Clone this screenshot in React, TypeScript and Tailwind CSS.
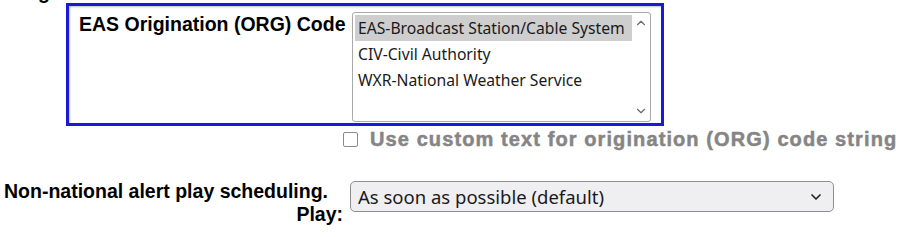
import { ChevronDown, ChevronUp } from "lucide-react";

const orgCodes = [
  "EAS-Broadcast Station/Cable System",
  "CIV-Civil Authority",
  "WXR-National Weather Service",
];

export default function App() {
  return (
    <div className="w-[907px] h-[237px] overflow-hidden bg-white font-['Liberation_Sans',Arial,sans-serif] text-black">
      {/* heading above, cut off by the viewport */}
      <div className="-mt-[18px] ml-[38px] h-[21px] text-[19.5px] font-bold leading-[21px]">g</div>

      {/* ORG code box */}
      <div className="ml-[66px] w-[598px] h-[123px] border-[3px] border-[#1a1ad6] shadow-[inset_1px_1px_2px_rgba(0,0,0,0.25)] flex pl-[10px]">
        <label className="w-[273px] text-[19.5px] font-bold leading-[22px] pt-[7px] whitespace-nowrap">
          EAS Origination (ORG) Code
        </label>
        <div className="mt-[6px] w-[299px] h-[110px] border border-[#a9a9a9] rounded-[3px] bg-white flex font-['Noto_Sans',sans-serif] text-[15.7px] text-[#1a1a1a]">
          <div className="flex-1 pt-[2px] pl-[2px]">
            {orgCodes.map((c, i) => (
              <div
                key={c}
                className={
                  "h-[26px] leading-[26px] pl-[3px] whitespace-nowrap " +
                  (i === 0 ? "bg-[#cecece]" : "")
                }
              >
                {c}
              </div>
            ))}
          </div>
          <div className="w-[18px] flex flex-col justify-between items-center py-[3px] text-[#6b6b6b]">
            <ChevronUp size={14} strokeWidth={2} />
            <ChevronDown size={14} strokeWidth={2} />
          </div>
        </div>
      </div>

      {/* custom text checkbox */}
      <div className="flex items-center ml-[343px] mt-[1px] h-[24px] gap-[12px]">
        <span className="w-[15px] h-[15px] border-[1.5px] border-[#8a8a8a] rounded-[2px] bg-white" />
        <span className="text-[20px] tracking-[1.1px] font-bold text-[#858585] leading-[24px] whitespace-nowrap [-webkit-text-stroke:0.5px_#858585]">
          Use custom text for origination (ORG) code string
        </span>
      </div>

      {/* play scheduling */}
      <div className="flex mt-[29px]">
        <label className="w-[343px] text-right text-[19.5px] font-bold leading-[23px] whitespace-nowrap">
          <div className="pr-[15px]">Non-national alert play scheduling.</div>
          <div>Play:</div>
        </label>
        <div className="ml-[7px] mt-[1px] w-[484px] h-[31px] rounded-[5px] border border-[#8f8f8f] bg-[#efeff2] flex items-center justify-between pl-[7px] pr-[9px] font-['Noto_Sans',sans-serif] text-[18.5px] text-[#1a1a1a]">
          <span>As soon as possible (default)</span>
          <ChevronDown size={16} strokeWidth={2.5} className="text-[#222]" />
        </div>
      </div>
    </div>
  );
}
